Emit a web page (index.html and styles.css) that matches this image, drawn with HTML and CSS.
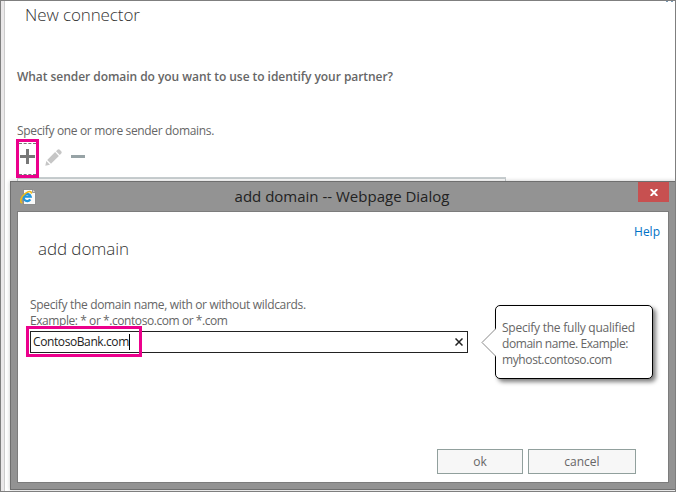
FILE: index.html
```html
<!DOCTYPE html>
<html lang="en">
<head>
<meta charset="utf-8">
<title>New connector</title>
<link rel="stylesheet" href="styles.css">
</head>
<body>
<div class="window">
  <main class="page">
    <h1 class="page-title"><span>New connector</span></h1>
    <h2 class="question"><span>What sender domain do you want to use to identify your partner?</span></h2>
    <p class="hint"><span>Specify one or more sender domains.</span></p>
    <div class="toolbar">
      <button class="tool tool-add" aria-label="Add"><svg width="15" height="15" viewBox="0 0 15 15"><path d="M0 7.5h15M7.5 0v15" stroke="#777" stroke-width="3"/></svg></button>
      <button class="tool tool-edit" aria-label="Edit"><svg width="17" height="17" viewBox="0 0 17 17" fill="#c6c6c6"><path d="M.3 16.7l1-4.7 3.7 3.7zM2.2 11l7.9-7.9 3.8 3.8L6 14.8zM11 2.2L12.5.8q1.200-1 2.300 0l1.400 1.400q1 1.200 0 2.300L14.800 6z"/></svg></button>
      <button class="tool tool-remove" aria-label="Remove"><svg width="14" height="3" viewBox="0 0 14 3"><path d="M0 0h14v3H0z" fill="#97a3a6"/></svg></button>
    </div>
    <div class="list"></div>
  </main>
  <svg class="corner" width="7" height="1" viewBox="0 0 7 1"><path d="M0 0h2v1H0zM5 0h2v1H5z" fill="#7899b5"/></svg>

  <section class="dialog">
    <header class="titlebar">
      <svg class="ie" width="17" height="16" viewBox="0 0 17 16">
        <path d="M3.500.5h9l3 3v12h-12z" fill="#fafafa" stroke="#777" stroke-width=".7"/>
        <path d="M12.500.5v3h3" fill="#ddd" stroke="#777" stroke-width=".7"/>
        <path d="M10.300 10.300A3.600 3.600 0 1 1 10.700 7.700H4.200" fill="none" stroke="#2296dc" stroke-width="2.300"/>
        <path d="M2.300 13.800C-.8 13.400.9 7.800 5.500 4.400 8.800 1.900 11.700 1.800 11.300 4.600" fill="none" stroke="#f0b916" stroke-width="1.600"/>
      </svg>
      <span class="titlebar-text">add domain -- Webpage Dialog</span>
      <button class="close" aria-label="Close"><svg width="8" height="7" viewBox="0 0 8 7"><path d="M.7 0l6.600 7M7.300 0L.7 7" stroke="#fff" stroke-width="1.900"/></svg></button>
    </header>
    <div class="client">
      <a class="help">Help</a>
      <h2 class="dialog-title"><span>add domain</span></h2>
      <div class="row">
        <div class="field">
          <label><span class="l1">Specify the domain name, with or without wildcards.</span><br><span class="l2">Example: * or *.contoso.com or *.com</span></label>
          <div class="input"><span class="value">ContosoBank.com</span><i class="caret"></i>
            <svg class="clear" width="8" height="8" viewBox="0 0 8 8"><path d="M.5.5l7 7M7.500.5l-7 7" stroke="#222" stroke-width="1.500"/></svg>
            <div class="mark mark-input"></div>
          </div>
        </div>
        <aside class="callout">
          <span class="c1">Specify the fully qualified</span><br><span class="c2">domain name. Example:</span><br><span class="c3">myhost.contoso.com</span>
          <svg class="pointer" width="15" height="29" viewBox="0 0 15 29"><path d="M15 .5L1 14.500l14 14" fill="#fff" stroke="#888"/></svg>
        </aside>
      </div>
      <footer class="actions">
        <button class="btn ok"><span>ok</span></button>
        <button class="btn cancel"><span>cancel</span></button>
      </footer>
    </div>
  </section>
</div>
</body>
</html>
```
FILE: styles.css
```css
* { box-sizing: border-box; }
body {
  margin: 0;
  font: 12px/16px "Open Sans", "Noto Sans", sans-serif;
  color: #666;
}
h1, h2, p { margin: 0; font-weight: 400; }
button { padding: 0; border: 0; background: none; font: inherit; color: inherit; }
svg { display: block; }
span { white-space: nowrap; }
.window {
  position: relative;
  width: 676px;
  height: 492px;
  overflow: hidden;
  border: 1px solid #7f7f7f;
  background: #fff;
}
.page {
  height: 490px;
  border-left: 3px solid #eae8e9;
  box-shadow: inset 1px 0 #ccc;
  padding: 2px 0 0 12px;
}
.page-title {
  padding-left: 9px;
  font-size: 17px;
  line-height: 24px;
  font-weight: 300;
  letter-spacing: -.1px;
  color: #333;
}
.question { margin-top: 42px; padding-left: 1px; font-size: 12px; font-weight: 600; }
.hint { margin-top: 38px; padding-left: 1px; }
.question span { letter-spacing: -.05px; }
.hint span { letter-spacing: -.34px; }
.toolbar { display: flex; align-items: center; height: 39px; }
.tool-add {
  display: grid;
  place-items: center;
  width: 23px;
  height: 39px;
  border: 3px solid #ec008c;
  position: relative;
}
.tool-add::after {
  content: "";
  position: absolute;
  inset: 1px 0 0;
  border: dashed #777;
  border-width: 1px 0;
}
.tool-add svg { margin-top: -4px; }
.tool-edit { margin: -3px 0 0 6px; }
.tool-remove { margin: -4px 0 0 9px; }
.list {
  width: 489px;
  height: 20px;
  margin: -1px 0 0 1px;
  border: solid #c8ced0;
  border-width: 2px 1px 1px;
}
.corner { position: absolute; top: 0; right: 2px; }
.dialog {
  position: absolute;
  left: 9px;
  top: 180px;
  width: 666px;
  height: 309px;
  border: solid #6f6f6f;
  border-width: 1px 0 1px 1px;
  background: #939393;
  box-shadow: 0 0 4px rgba(0, 0, 0, .22);
}
.titlebar {
  display: grid;
  grid-template-columns: 1fr auto 1fr;
  height: 29px;
  padding-right: 6px;
  color: #222;
}
.ie { margin: 7px 0 0 9px; }
.titlebar-text { margin-left: 3px; font-size: 15px; line-height: 29px; }
.close {
  display: grid;
  place-items: center;
  justify-self: end;
  width: 31px;
  height: 20px;
  margin-right: 1px;
  background: #c75050;
}
.client {
  width: 652px;
  height: 272px;
  margin-left: 6px;
  padding: 12px 8px 0 12px;
  border: 1px solid #7c7c7c;
  background: #fff;
}
.help { display: block; text-align: right; color: #0072c6; }
.dialog-title {
  margin-top: -3px;
  padding-left: 8px;
  font-size: 17px;
  line-height: 24px;
  font-weight: 300;
  letter-spacing: -.08px;
  color: #333;
}
.row { display: flex; margin-top: 36px; }
.field { width: 438px; }
.field label { display: block; }
.l1 { letter-spacing: -.33px; }
.l2 { letter-spacing: -.43px; }
.value { letter-spacing: -.4px; }
.c1 { letter-spacing: -.24px; }
.c2 { letter-spacing: -.43px; }
.c3 { letter-spacing: -.39px; }
.input {
  position: relative;
  display: flex;
  align-items: center;
  height: 22px;
  margin-top: 2px;
  padding: 0 4px 0 2px;
  border: 1px solid #222;
  color: #222;
}
.caret { width: 1px; height: 16px; background: #000; }
.clear { margin-left: auto; }
.mark { position: absolute; border: 3px solid #ec008c; }
.mark-input { left: -5px; top: -6px; width: 116px; height: 31px; }
.callout {
  position: relative;
  width: 158px;
  height: 74px;
  margin: 8px 0 0 27px;
  padding: 14px 0 0 6px;
  border: 1px solid #000;
  border-radius: 5px;
  background: #fff;
  box-shadow: 3px 3px 4px rgba(0, 0, 0, .5);
}
.pointer { position: absolute; left: -15px; top: 22px; }
.actions {
  display: flex;
  justify-content: flex-end;
  gap: 5px;
  margin: 70px 24px 0 0;
}
.btn {
  height: 25px;
  border: 1px solid #91a09d;
  background: #f7f7f7;
  line-height: 22px;
}
.ok { width: 86px; }
.cancel { width: 108px; }
```
